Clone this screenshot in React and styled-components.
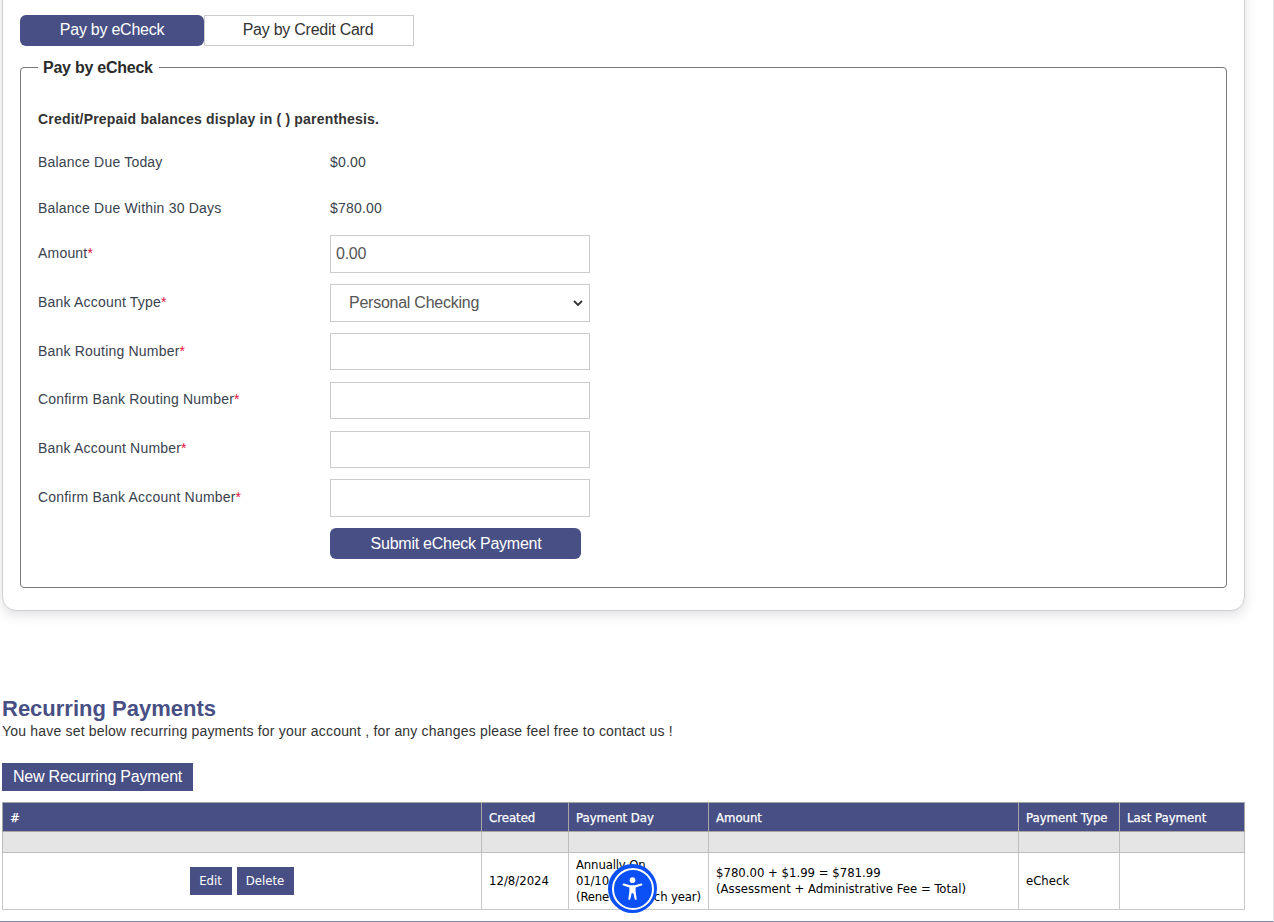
import React from "react";
import styled, { createGlobalStyle } from "styled-components";

const Global = createGlobalStyle`
  html, body { margin: 0; padding: 0; background: #fff; }
  body { font-family: "Liberation Sans", Arial, sans-serif; color: #333; }
  * { box-sizing: border-box; }
`;

const Viewport = styled.div`
  position: relative;
  width: 1274px;
  height: 922px;
  overflow: hidden;
  border-right: 1px solid #e4e4e6;
  border-bottom: 1px solid #7f86ad;
`;

const Page = styled.main`
  padding-left: 2px;
  width: 1243px;
`;

const Card = styled.section`
  margin-top: -30px;
  height: 641px;
  width: 1243px;
  padding: 44px 17px 0 17px;
  background: #fff;
  border: 1px solid #d0d0d0;
  border-radius: 14px;
  box-shadow: 0 4px 12px rgba(60, 64, 80, 0.16);
`;

const Tabs = styled.div`
  display: flex;
`;

const Tab = styled.button`
  height: 31px;
  width: ${(p) => p.$w}px;
  padding: ${(p) => (p.$active ? "0 0 2px" : "0 2px 2px 0")};
  font: 16px "Liberation Sans", Arial, sans-serif;
  letter-spacing: -0.25px;
  color: ${(p) => (p.$active ? "#fff" : "#333")};
  background: ${(p) => (p.$active ? "#474f84" : "#fff")};
  border: ${(p) => (p.$active ? "none" : "1px solid #ccc")};
  border-radius: ${(p) => (p.$active ? "6px" : "0")};
`;

const Fieldset = styled.fieldset`
  margin: 11px 0 0;
  padding: 0 17px 0;
  height: 531px;
  width: 1207px;
  border: 1px solid #777;
  border-radius: 4px;
`;

const Legend = styled.legend`
  margin-left: 0;
  padding: 2px 6px 0 5px;
  font-size: 16px;
  line-height: 18px;
  font-weight: 700;
  letter-spacing: -0.25px;
  color: #2b2b2b;
`;

const Note = styled.p`
  margin: 34px 0 27px;
  font-size: 14px;
  line-height: 16px;
  font-weight: 700;
  letter-spacing: 0.19px;
  color: #333;
`;

const Row = styled.div`
  display: grid;
  grid-template-columns: 292px 260px;
  align-items: center;
  height: ${(p) => p.$h}px;
  margin-bottom: ${(p) => p.$mb ?? 11}px;
  font-size: 14px;
  letter-spacing: 0.2px;
  color: #39424e;
`;

const Label = styled.label`
  position: relative;
  top: ${(p) => p.$top ?? -1}px;
`;

const Req = styled.span`
  color: #e0143c;
`;

const Input = styled.input`
  width: 260px;
  height: ${(p) => p.$h ?? 37}px;
  padding: 0 5px;
  font: 16px "Liberation Sans", Arial, sans-serif;
  letter-spacing: -0.25px;
  color: #555;
  background: #fff;
  border: 1px solid #ccc;
  border-radius: 0;
`;

const chevron = encodeURIComponent(
  '<svg xmlns="http://www.w3.org/2000/svg" width="10" height="6" viewBox="0 0 10 6"><path d="M1 1l4 4 4-4" fill="none" stroke="#333" stroke-width="1.8"/></svg>'
);

const Select = styled.select`
  appearance: none;
  width: 260px;
  height: 38px;
  padding: 0 14px 2px 18px;
  font: 16px "Liberation Sans", Arial, sans-serif;
  letter-spacing: -0.25px;
  color: #555;
  background: #fff url("data:image/svg+xml,${chevron}") no-repeat right 6px center;
  border: 1px solid #ccc;
  border-radius: 0;
`;

const Submit = styled.button`
  width: 251px;
  height: 31px;
  padding: 0 0 0 1px;
  font: 16px "Liberation Sans", Arial, sans-serif;
  letter-spacing: -0.25px;
  color: #fff;
  background: #474f84;
  border: none;
  border-radius: 6px;
`;

const Heading = styled.h2`
  margin: 85px 0 0;
  font-size: 22px;
  line-height: 25px;
  font-weight: 700;
  color: #474f84;
`;

const Lead = styled.p`
  margin: 1px 0 0;
  font-size: 14px;
  line-height: 18px;
  letter-spacing: 0.19px;
  color: #333;
`;

const NewButton = styled.button`
  display: block;
  margin: 23px 0 11px;
  width: 191px;
  height: 28px;
  padding: 0;
  font: 16px "Liberation Sans", Arial, sans-serif;
  letter-spacing: -0.2px;
  color: #fff;
  background: #474f84;
  border: none;
`;

const Table = styled.table`
  width: 1242px;
  table-layout: fixed;
  border-collapse: collapse;
  border: 1px solid #a6a6a6;
  font-family: "DejaVu Sans", Verdana, sans-serif;
  font-stretch: condensed;
  font-size: 13px;
  line-height: 16px;
  color: #000;
`;

const HeadCell = styled.th`
  height: 29px;
  padding: 2px 7px 0;
  text-align: left;
  font-weight: 400;
  color: #fff;
  background: #474f84;
  border: 1px solid #a6a6a6;
  -webkit-text-stroke: 0.25px #fff;
`;

const SpacerCell = styled.td`
  height: 21px;
  padding: 0;
  background: #e5e5e5;
  border: 1px solid #bdbdbd;
`;

const Cell = styled.td`
  height: 57px;
  padding: 0 7px;
  border: 1px solid #c8c8c8;
  white-space: nowrap;
  letter-spacing: ${(p) => (p.$tight ? "-0.15px" : "normal")};
  text-align: ${(p) => p.$align || "left"};
`;

const ActionButton = styled.button`
  width: ${(p) => p.$w}px;
  height: 28px;
  margin-right: ${(p) => p.$mr ?? 0}px;
  padding: 0 1px 1px 0;
  font: 13px "DejaVu Sans", Verdana, sans-serif;
  font-stretch: condensed;
  color: #fff;
  background: #474f84;
  border: none;
`;

const A11y = styled.div`
  position: absolute;
  left: 608px;
  top: 864px;
  width: 49px;
  height: 49px;
  display: flex;
  align-items: center;
  justify-content: center;
  background: #0b50f5;
  border-radius: 50%;
`;

const A11yRing = styled.div`
  width: 42px;
  height: 42px;
  display: flex;
  align-items: center;
  justify-content: center;
  border: 2px solid #fff;
  border-radius: 50%;
`;

const widths = [479, 87, 140, 310, 101, 125];
const heads = ["#", "Created", "Payment Day", "Amount", "Payment Type", "Last Payment"];

export default function App() {
  return (
    <Viewport>
      <Global />
      <Page>
        <Card>
          <Tabs>
            <Tab $active $w={184}>Pay by eCheck</Tab>
            <Tab $w={210}>Pay by Credit Card</Tab>
          </Tabs>
          <Fieldset>
            <Legend>Pay by eCheck</Legend>
            <Note>Credit/Prepaid balances display in ( ) parenthesis.</Note>
            <Row $h={16} $mb={30}>
              <span>Balance Due Today</span>
              <span>$0.00</span>
            </Row>
            <Row $h={16} $mb={19}>
              <span>Balance Due Within 30 Days</span>
              <span>$780.00</span>
            </Row>
            <Row $h={38}>
              <Label>Amount<Req>*</Req></Label>
              <Input defaultValue="0.00" $h={38} />
            </Row>
            <Row $h={38}>
              <Label>Bank Account Type<Req>*</Req></Label>
              <Select defaultValue="pc"><option value="pc">Personal Checking</option></Select>
            </Row>
            <Row $h={37} $mb={12}>
              <Label>Bank Routing Number<Req>*</Req></Label>
              <Input />
            </Row>
            <Row $h={37} $mb={12}>
              <Label $top={-2}>Confirm Bank Routing Number<Req>*</Req></Label>
              <Input />
            </Row>
            <Row $h={37}>
              <Label $top={-2}>Bank Account Number<Req>*</Req></Label>
              <Input />
            </Row>
            <Row $h={38}>
              <Label>Confirm Bank Account Number<Req>*</Req></Label>
              <Input $h={38} />
            </Row>
            <Row $h={31}>
              <span />
              <Submit>Submit eCheck Payment</Submit>
            </Row>
          </Fieldset>
        </Card>
        <Heading>Recurring Payments</Heading>
        <Lead>You have set below recurring payments for your account , for any changes please feel free to contact us !</Lead>
        <NewButton>New Recurring Payment</NewButton>
        <Table>
          <colgroup>
            {widths.map((w, i) => <col key={i} width={w} />)}
          </colgroup>
          <thead>
            <tr>{heads.map((h) => <HeadCell key={h}>{h}</HeadCell>)}</tr>
          </thead>
          <tbody>
            <tr>{heads.map((h) => <SpacerCell key={h} />)}</tr>
            <tr>
              <Cell $align="center">
                <ActionButton $w={42} $mr={5}>Edit</ActionButton>
                <ActionButton $w={57}>Delete</ActionButton>
              </Cell>
              <Cell>12/8/2024</Cell>
              <Cell $tight>Annually On<br />01/10/2025<br />(Renewing each year)</Cell>
              <Cell>$780.00 + $1.99 = $781.99<br />(Assessment + Administrative Fee = Total)</Cell>
              <Cell>eCheck</Cell>
              <Cell />
            </tr>
          </tbody>
        </Table>
      </Page>
      <A11y>
        <A11yRing>
          <svg width="23" height="25" viewBox="0 0 26 28" fill="#fff">
            <circle cx="13" cy="4.6" r="3.2" />
            <path d="M3.4 8.4c-.7-.2-1.3.2-1.5.8-.2.6.2 1.2.8 1.4l6.8 2.2v4.4l-1.2 8.3c-.1.7.3 1.3 1 1.4.6.1 1.2-.3 1.3-.9L12 19.5h2l1.4 6.5c.1.6.7 1 1.3.9.7-.1 1.1-.7 1-1.4l-1.2-8.3v-4.4l6.8-2.2c.6-.2 1-.8.8-1.4-.2-.6-.8-1-1.5-.8l-7 1.9h-5.2l-7-1.9z" />
          </svg>
        </A11yRing>
      </A11y>
    </Viewport>
  );
}
